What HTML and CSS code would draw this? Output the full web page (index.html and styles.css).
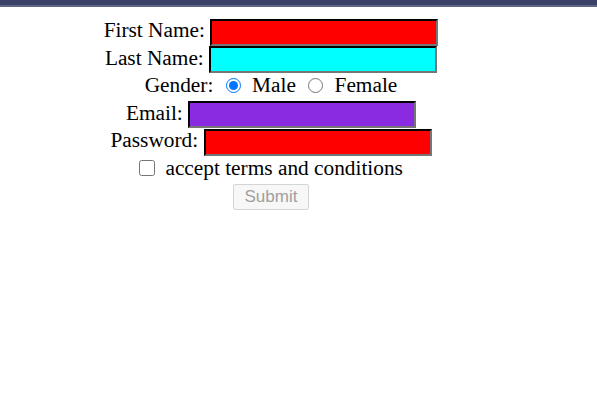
FILE: index.html
```html
<!DOCTYPE html>
<html>
<head>
<meta charset="utf-8">
<link rel="stylesheet" href="styles.css">
</head>
<body>
<div class="topbar"></div>
<form class="form">
  <div class="row">First Name: <input class="field red" type="text"></div>
  <div class="row">Last Name: <input class="field cyan" type="text"></div>
  <div class="row">Gender: <input class="radio" type="radio" name="g" checked> Male <input class="radio" type="radio" name="g"> Female</div>
  <div class="row">Email: <input class="field violet" type="email"></div>
  <div class="row">Password: <input class="field red" type="password"></div>
  <div class="row"><input class="check" type="checkbox"> accept terms and conditions</div>
  <div class="row-btn"><button class="submit" type="submit" disabled>Submit</button></div>
</form>
</body>
</html>
```
FILE: styles.css
```css
html, body {
  margin: 0;
  padding: 0;
  background: #fff;
}
.topbar {
  height: 5px;
  background: #3b4268;
  border-bottom: 2px solid #5f6789;
}
.form {
  width: 542px;
  margin: 9px 0 0 0;
  text-align: center;
  font-family: "Liberation Serif", "Times New Roman", serif;
  font-size: 21.33px;
  color: #000;
}
.row {
  height: 27.5px;
  line-height: 28px;
  white-space: nowrap;
}
.row-btn {
  padding-top: 3px;
  line-height: 0;
}
.field {
  box-sizing: border-box;
  width: 228px;
  height: 27px;
  border: 2px inset #767676;
  border-top-color: #222;
  border-left-color: #222;
  margin: 0;
  padding: 0;
  vertical-align: middle;
}
.red { background: #ff0000; }
.cyan { background: #00ffff; }
.violet { background: #8a2be2; }
.radio {
  width: 15px;
  height: 15px;
  margin: 0 6px 0 7px;
  vertical-align: -1px;
}
.check {
  width: 16px;
  height: 16px;
  margin: 0 5px 0 0;
  vertical-align: -1px;
}
.submit {
  box-sizing: border-box;
  font-family: "Liberation Sans", Arial, sans-serif;
  font-size: 17px;
  line-height: 20px;
  padding: 0 10px;
  width: 76px;
  height: 26px;
  color: #a0a0a0;
  background: #f7f7f7;
  border: 1px solid #d4d4d4;
  border-radius: 2px;
  vertical-align: top;
}
```
